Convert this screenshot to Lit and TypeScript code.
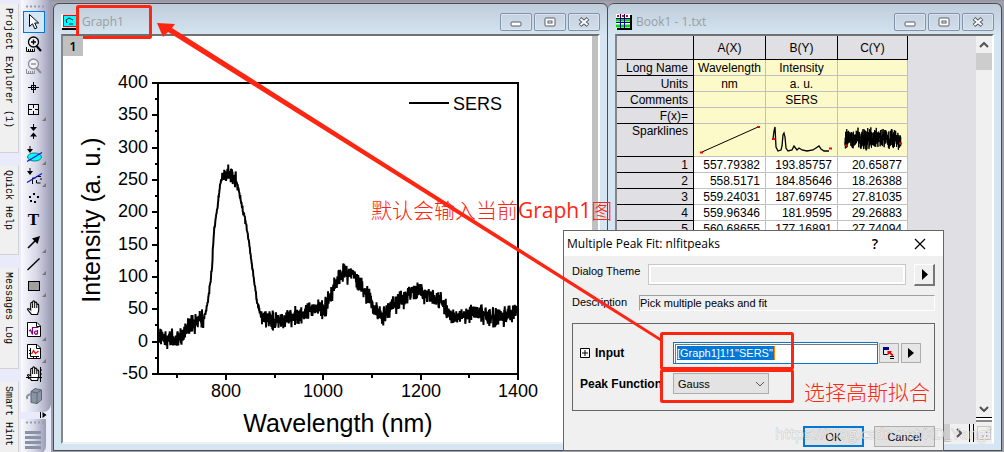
import { LitElement, html, svg, css } from "lit";
import { customElement } from "lit/decorators.js";

/* ---------- spectrum data ---------- */

const TREND: [number, number][] = [
  [159, 334], [163, 338], [167, 340], [177, 339], [182, 335], [188, 328], [194, 325], [200, 317], [204, 319],
  [208, 302], [212, 267], [214, 230], [217, 211], [220, 184], [223, 174], [230, 174], [234, 177], [238, 186],
  [241, 202], [245, 219], [249, 242], [253, 272], [257, 302], [261, 316], [267, 318], [273, 322],
  [280, 320], [288, 319], [295, 315], [303, 317], [310, 309], [325, 308], [330, 295], [338, 278],
  [343, 274], [353, 274], [360, 283], [368, 297], [375, 309], [383, 315], [390, 310], [400, 300],
  [410, 294], [420, 291], [433, 297], [442, 303], [448, 314], [455, 318], [463, 315], [472, 311],
  [483, 313], [495, 318], [507, 315], [517, 309],
];

function noise(seed: number): () => number {
  let s = seed;
  return () => {
    s = (s * 1103515245 + 12345) % 2147483648;
    return s / 2147483648;
  };
}

function spectrum(): string {
  const rnd = noise(41);
  const pts: string[] = [];
  for (let i = 0; i < TREND.length - 1; i++) {
    const [x0, y0] = TREND[i];
    const [x1, y1] = TREND[i + 1];
    const steep = Math.abs((y1 - y0) / (x1 - x0)) > 3;
    for (let x = x0; x < x1; x += 0.25) {
      const y = y0 + ((y1 - y0) * (x - x0)) / (x1 - x0);
      const r = rnd() + rnd() + rnd() - 1.5;
      pts.push(`${x},${(y + r * (steep ? 3 : 9)).toFixed(1)}`);
    }
  }
  return pts.join(" ");
}

function noisyBand(): string {
  const rnd = noise(7);
  const pts: string[] = [];
  for (let x = 7; x < 63; x += 0.125) pts.push(`${x},${(12 + (rnd() + rnd() - 1) * 12).toFixed(1)}`);
  return pts.join(" ");
}

const Y_TICKS = [400, 350, 300, 250, 200, 150, 100, 50, 0, -50];
const X_TICKS = [800, 1000, 1200, 1400];
const yPos = (v: number) => Math.round(341.6 - v * 0.6467);
const xPos = (v: number) => Math.round(226 + (v - 800) * 0.4867);

/* ---------- toolbar icons, each on a 22 x 22 grid ---------- */

const downArrow = svg`<path d="M7 3v5" stroke="#000"/><path d="M4 6h6l-3 4z" fill="#000"/>`;
const ruler = svg`<path d="M3.500 14v4.500h8v-3M5.500 16v2M7.500 16v2M9.500 16v2" fill="none" stroke="currentColor"/>`;
const lens = svg`<circle cx="10.500" cy="9" r="5" fill="#fff" fill-opacity=".6" stroke="currentColor" stroke-width="1.300"/>
  <path d="M13.500 13l4.500 5" stroke="currentColor" stroke-width="2.200"/>`;
const hand = svg`<path d="M8.500 17.500c-1-2-3-3.500-4-5 .5-1.500 2-.8 3.200.5V6.500c.2-1.500 1.700-1.500 1.900 0V5c.2-1.500 2-1.500 2.100 0v1c.3-1.200 1.900-1.200 2.100.3v1.400c.4-1 1.900-.8 1.900.6v5c0 1.500-1 2.500-1.200 4.200z"
  fill="#fff" stroke="#000" stroke-width="1.100"/><path d="M9.600 6.500v4.500M11.700 6v5M13.800 7.500V11" stroke="#000"/>`;
const sheet = svg`<path d="M4.500 3.500h9.500l3.500 3.500v10.500h-13z" fill="#fff" stroke="#000"/><path d="M13.500 3.500v4h4" fill="none" stroke="#000"/>`;

const TOOLS: { name: string; art: unknown; on?: boolean; more?: boolean }[] = [
  { name: "Pointer", on: true, art: svg`<path d="M6.500 3.500v12l3-2.700 2.300 5 2.200-1-2.300-4.800h4z" fill="#fff" stroke="#000"/>` },
  { name: "Zoom in", art: svg`${ruler}${lens}<path d="M8 9h5M10.500 6.500v5" stroke="#000" stroke-width="1.400"/>` },
  { name: "Zoom out", art: svg`<g color="#8a8d99">${ruler}${lens}<path d="M8 9h5" stroke="currentColor" stroke-width="1.400"/></g>` },
  { name: "Screen reader", art: svg`<path d="M10.500 5v11M5 10.500h11" stroke="#000"/><rect x="8.500" y="8.500" width="4" height="4" fill="none" stroke="#000"/>` },
  { name: "Data selector", more: true, art: svg`<rect x="5.500" y="5.500" width="10" height="10" fill="#fff" fill-opacity=".4" stroke="#000"/><path d="M10.500 6v3M10.500 12v3M6 10.500h3M12 10.500h3" stroke="#000"/>` },
  { name: "Data range", art: svg`<path d="M10.500 3v4M10.500 14v4" stroke="#000"/><path d="M7 6h7l-3.500 4zM7 15.500h7l-3.500-4z" fill="#000"/>` },
  { name: "Mask points", more: true, art: svg`<ellipse cx="11.500" cy="14" rx="7" ry="4" fill="#0ff" stroke="#087d86"/><path d="M4 18.500L19 9.500" stroke="#1414d8" stroke-width="1.300"/>${downArrow}` },
  { name: "Mask curve", more: true, art: svg`<path d="M9.500 19v-6h3M13 11.500h5M13.500 15v3h4M18 13v2" stroke="#000" fill="none"/><path d="M4 17.500L19 8.500" stroke="#1414d8" stroke-width="1.300"/>${downArrow}` },
  { name: "Draw data", art: svg`<path d="M10 6h2v2h-2zM6 9h2v2h-2zM14 9h2v2h-2zM7 13h2v2h-2zM11 14h2v2h-2z" fill="#000"/>` },
  { name: "Text", art: svg`<text class="glyph" x="10.500" y="16" text-anchor="middle">T</text>` },
  { name: "Arrow", more: true, art: svg`<path d="M5 17L13 9" stroke="#000" stroke-width="1.600"/><path d="M17 5l-2.500 8-5.500-5.500z" fill="#000"/>` },
  { name: "Line", more: true, art: svg`<path d="M4.500 17L16.500 5.500" stroke="#000" stroke-width="1.400"/>` },
  { name: "Rectangle", more: true, art: svg`<rect x="5.500" y="6.500" width="11" height="9" fill="#a0a0a0" stroke="#000"/>` },
  { name: "Pan", art: hand },
  { name: "Insert equation", more: true, art: svg`${sheet}<path d="M6 12l1.500-1 2 4.500V8.500h6M14.500 11v4.500M14.500 12.500c-3-2-4 2.500-1.500 2.800l1.500-1" fill="none" stroke="#800080" stroke-width="1.200"/>` },
  { name: "Insert graph", more: true, art: svg`${sheet}<path d="M7.500 7v8.500H16M6 9.500h1M6 12.500h1M10.500 16v1M13.500 16v1" stroke="#000" fill="none"/><path d="M8.500 13l2-3.500 2 3 3-2.500" stroke="#e11" fill="none" stroke-width="1.300"/>` },
  { name: "Rescale", art: svg`<g>${hand}</g><path d="M3 14.500h16M17.500 4v15M5.500 13v3M17 7h2M17 11h2" stroke="#000"/>` },
  { name: "3D rotate", art: svg`<path d="M8 6.500l4-3 6.500 1.500v10l-4.500 3.500-6-1z" fill="#8993a2" stroke="#5d6675"/><path d="M8 6.500l6 1.500 4.500-3M14 8v10.500" fill="none" stroke="#5d6675"/><path d="M8 9c-4 1-5 3-3.500 5" fill="none" stroke="#8993a2" stroke-width="2"/>` },
];

/* ---------- window frame ---------- */

@customElement("mdi-window")
export class MdiWindow extends LitElement {
  static properties = { caption: { type: String } };
  caption = "";
  static styles = css`
    :host { display: flex; flex-direction: column; box-sizing: border-box; min-width: 0;
      border: 1px solid #4c4c50; border-radius: 6px 6px 0 0; padding: 0 7px 6px;
      background: linear-gradient(#bfcddb, #d6e5f2 32px); }
    header { display: flex; align-items: center; height: 30px; gap: 4px; }
    h2 { margin: 0; flex: 1; font: 400 12px/18px "Open Sans", "Noto Sans", sans-serif; color: #999da2; padding-top: 6px; white-space: nowrap; }
    .btns { display: flex; gap: 2px; padding-top: 6px; }
    button { width: 32px; height: 18px; padding: 0; border: 1px solid #8193ab; border-radius: 2px;
      background: linear-gradient(#c5d2e0, #d3deea); box-shadow: inset 0 0 0 1px #dbe5ef; display: grid; place-items: center; }
    .client { flex: 1; display: flex; min-height: 0; border: 2px solid #fff; border-top-color: #6f7072; border-left-color: #85868a; border-bottom-color: #f1f1f1; background: #fff; }
    svg { display: block; }
    ::slotted([slot="body"]) { flex: 1; min-width: 0; }
  `;
  render() {
    return html`
      <header>
        <slot name="icon"></slot>
        <h2>${this.caption}</h2>
        <div class="btns">
          <button aria-label="Minimize"><svg width="14" height="12"><rect x="2" y="6" width="10" height="4" rx="1" fill="#fff" stroke="#565d68"/></svg></button>
          <button aria-label="Maximize"><svg width="14" height="12"><rect x="2" y="2" width="10" height="8" rx="1" fill="#fff" stroke="#565d68"/><rect x="5" y="5" width="4" height="2" fill="#fff" stroke="#565d68"/></svg></button>
          <button aria-label="Close"><svg width="14" height="12"><path d="M3 2.500L11 9.500M11 2.500L3 9.500" stroke="#565d68" stroke-width="4"/><path d="M3.500 3L10.500 9M10.500 3L3.500 9" stroke="#fff" stroke-width="2"/></svg></button>
        </div>
      </header>
      <div class="client"><slot name="body"></slot></div>
    `;
  }
}

/* ---------- graph ---------- */

@customElement("graph-page")
export class GraphPage extends LitElement {
  static styles = css`
    :host { display: grid; grid-template-columns: 1fr 6px; background: #fff; }
    .plot { grid-area: 1 / 1; width: 100%; display: block; }
    .strip { grid-area: 1 / 2; background: #c0c0c0; }
    .layer { grid-area: 1 / 1; justify-self: start; align-self: start; z-index: 1; width: 20px; height: 20px;
      padding: 0; border: 0; background: #c0c0c0; color: #000; font: 600 13px/20px "Open Sans", sans-serif; }
    text { font-family: "Liberation Sans", Arial, sans-serif; font-size: 18px; fill: #000; }
    .axis { font-size: 25px; }
  `;
  render() {
    return html`
      <svg class="plot" viewBox="63 36 529 405" role="img" aria-label="SERS spectrum">
        <polyline points=${spectrum()} fill="none" stroke="#000" stroke-width="2" stroke-linejoin="bevel"/>
        <rect x="158" y="83" width="360" height="291" fill="none" stroke="#000" stroke-width="2"/>
        ${Y_TICKS.map((v) => svg`<path d="M152 ${yPos(v)}h6" stroke="#000" stroke-width="2"/>
          <text x="148" y=${yPos(v) + 5} text-anchor="end">${v}</text>
          ${v > -50 ? svg`<path d="M155 ${yPos(v - 25)}h3" stroke="#000" stroke-width="2"/>` : ""}`)}
        ${X_TICKS.map((v) => svg`<path d="M${xPos(v)} 374v6M${xPos(v - 100)} 374v4" stroke="#000" stroke-width="2"/>
          <text x=${xPos(v)} y="397" text-anchor="middle">${v}</text>`)}
        <path d="M409 103h40" stroke="#000" stroke-width="2"/>
        <text x="453" y="110">SERS</text>
        <text class="axis" x="338" y="432" text-anchor="middle">Wavelength (nm)</text>
        <text class="axis" transform="translate(100 220) rotate(-90)" text-anchor="middle">Intensity (a. u.)</text>
      </svg>
      <button class="layer">1</button>
      <div class="strip"></div>
    `;
  }
}

/* ---------- worksheet ---------- */

const ROWS = [
  ["557.79382", "193.85757", "20.65877"],
  ["558.5171", "184.85646", "18.26388"],
  ["559.24031", "187.69745", "27.81035"],
  ["559.96346", "181.9595", "29.26883"],
  ["560.68655", "177.16891", "27.74094"],
];
const LABELS = [
  ["Long Name", "Wavelength", "Intensity", ""],
  ["Units", "nm", "a. u.", ""],
  ["Comments", "", "SERS", ""],
  ["F(x)=", "", "", ""],
];

@customElement("work-sheet")
export class WorkSheet extends LitElement {
  static styles = css`
    :host { display: grid; grid-template-columns: 1fr 16px; grid-template-rows: 1fr 18px; background: #e0dfe4; color: #000;
      font: 12px/14px "Liberation Sans", Arial, sans-serif; }
    .sheet { overflow: hidden; }
    table { border-collapse: separate; border-spacing: 0; table-layout: fixed; width: 291px; }
    .c0 { width: 77px; } .c1 { width: 72px; } .c3 { width: 70px; }
    th, td { box-sizing: border-box; height: 16px; padding: 0 5px 0 0; font-weight: 400; white-space: nowrap; overflow: hidden; }
    th { background: #e0dfe4; border-right: 1px solid #000; border-bottom: 1px solid #000; text-align: right; }
    thead th { height: 24px; text-align: center; padding: 0; }
    td { background: #fff; border-right: 1px solid #c0c0c0; border-bottom: 1px solid #c0c0c0; text-align: right; }
    .meta { background: #fbfac8; text-align: center; padding: 0; }
    .spark th, .spark td { height: 33px; vertical-align: top; }
    .spark svg { display: block; }
    .v { display: flex; flex-direction: column; background: #f0f0f0; }
    .v i { height: 17px; background: #cdcdcd; }
    .v .fill { flex: 1; }
    .v .split { height: 2px; border-top: 1px solid #000; border-bottom: 2px solid #888; margin-bottom: 2px; background: #fff; }
    .arrow { height: 17px; display: grid; place-items: center; border: 0; background: none; padding: 0; }
    .h { grid-column: 1 / 3; display: flex; justify-content: flex-end; background: #f0f0f0; }
    .h i { width: 40px; background: #cdcdcd; }
    .h .arrow { width: 18px; height: 18px; }
    .h .bars { width: 3px; border-left: 1px solid #000; border-right: 1px solid #000; margin: 0 2px 0 1px; }
    .grip { width: 16px; display: grid; place-items: center; }
  `;
  render() {
    return html`
      <div class="sheet">
        <table>
          <colgroup><col class="c0"><col class="c1"><col class="c1"><col class="c3"></colgroup>
          <thead><tr><th></th><th scope="col">A(X)</th><th scope="col">B(Y)</th><th scope="col">C(Y)</th></tr></thead>
          <tbody>
            ${LABELS.map(([h, ...cells]) => html`<tr><th scope="row">${h}</th>${cells.map((c) => html`<td class="meta">${c}</td>`)}</tr>`)}
            <tr class="spark">
              <th scope="row">Sparklines</th>
              <td class="meta"><svg width="71" height="32"><path d="M8 28L64 3" stroke="#000"/><path d="M6 28.500h3M63 3h3" stroke="#f00" stroke-width="2"/></svg></td>
              <td class="meta"><svg width="71" height="32"><path d="M7 15l1-8 1-4 1 20 2 4 3-1 1-4 1-11 1-2 1 4 1 11 2 3 4-1 2-4 3 4 2-2 3 2 5 1 6-1 3-2 3-2 2 3 3 2 5 0" fill="none" stroke="#000" stroke-width="1.300"/><path d="M6 15h3M63 24.500h3" stroke="#f00" stroke-width="2"/></svg></td>
              <td class="meta"><svg width="69" height="32"><polyline points=${noisyBand()} transform="translate(0 3)" fill="none" stroke="#000"/><path d="M7 21.500h2M61 19.500h3" stroke="#f00" stroke-width="2"/></svg></td>
            </tr>
            ${ROWS.map((r, i) => html`<tr><th scope="row">${i + 1}</th>${r.map((c) => html`<td>${c}</td>`)}</tr>`)}
          </tbody>
        </table>
      </div>
      <div class="v">
        <button class="arrow" aria-label="Scroll up"><svg width="10" height="6"><path d="M1 5l4-4 4 4" fill="none" stroke="#505050" stroke-width="2"/></svg></button>
        <i></i><span class="fill"></span>
        <button class="arrow" aria-label="Scroll down"><svg width="10" height="6"><path d="M1 1l4 4 4-4" fill="none" stroke="#505050" stroke-width="2"/></svg></button>
        <div class="split"></div>
      </div>
      <div class="h">
        <i></i>
        <button class="arrow" aria-label="Scroll right"><svg width="6" height="10"><path d="M1 1l4 4-4 4" fill="none" stroke="#505050" stroke-width="2"/></svg></button>
        <div class="bars"></div>
        <div class="grip"><svg width="14" height="14"><rect x=".5" y=".5" width="13" height="13" fill="none" stroke="#c8c8c8"/><path d="M9 5h2v2H9zM9 9h2v2H9zM5 9h2v2H5z" fill="#b0b0b0"/></svg></div>
      </div>
    `;
  }
}

/* ---------- dialog ---------- */

@customElement("peak-dialog")
export class PeakDialog extends LitElement {
  static styles = css`
    :host { display: block; box-sizing: border-box; border: 1px solid #666; background: #f0f0f0; color: #000;
      font: 11px/14px "Liberation Sans", Arial, sans-serif; }
    header { display: flex; align-items: center; height: 25px; background: #fff; padding: 0 8px 0 3px; }
    h2 { margin: 0; flex: 1; font: 400 12px/16px "Open Sans", "Noto Sans", sans-serif; }
    header button { width: 30px; padding: 0; border: 0; background: none; display: grid; place-items: center; font: 600 14px/18px "Open Sans", sans-serif; }
    header button + button { margin-left: 15px; }
    form { display: flex; flex-direction: column; padding: 8px 8px 3px; }
    input, select, button, .in { font: inherit; color: inherit; box-sizing: border-box; border-radius: 0; margin: 0; }
    .row { display: flex; align-items: flex-start; justify-content: space-between; }
    .theme { width: 258px; height: 21px; border: 1px solid #c8c8c8; outline: 2px solid #fff; outline-offset: -3px; background: #f0f0f0; padding: 0 4px; }
    .go { width: 21px; height: 22px; padding: 0; border: 1px solid #fff; border-right: 2px solid #777; border-bottom: 2px solid #777; background: #f0f0f0; display: grid; place-items: center; }
    .desc { margin-top: 9px; }
    .text { width: 296px; height: 16px; border: 1px solid #a0a0a0; border-right-color: #fff; border-bottom-color: #fff; background: #f0f0f0; padding: 0; }
    fieldset { margin: 12px 0 0; padding: 18px 8px 16px 7px; border: 1px solid #666; min-width: 0; display: flex; flex-direction: column; gap: 9px; }
    .line { display: flex; align-items: center; }
    .line label { flex: none; width: 93px; box-sizing: border-box; padding-right: 12px; font-size: 12px; font-weight: 700; display: flex; align-items: center; gap: 5px; white-space: nowrap; overflow: hidden; }
    .in { flex: none; width: 205px; height: 22px; border: 1px solid #0078d7; box-shadow: inset 1px 1px #fff, inset 2px 2px #777; background: #fff; display: flex; align-items: center; padding: 0 3px; }
    .in input { border: 0; padding: 0; outline: 0; width: 98px; height: 14px; background: #0078d7; color: #fff; border-right: 1px solid #ff8a00; }
    .sq { width: 20px; height: 20px; padding: 0; border: 1px solid #adadad; background: #e6e6e6; display: grid; place-items: center; margin-left: 1px; }
    .sq + .sq { margin-left: 2px; }
    .pick { display: grid; width: 96px; height: 21px; }
    select { appearance: none; grid-area: 1 / 1; border: 1px solid #adadad; background: #e3e3e3; padding: 0 4px; }
    .pick svg { grid-area: 1 / 1; justify-self: end; align-self: center; margin-right: 4px; pointer-events: none; }
    footer { display: flex; justify-content: flex-end; gap: 10px; padding-top: 15px; }
    footer button { width: 61px; height: 21px; padding: 0; border: 1px solid #adadad; background: #e1e1e1; }
    footer .ok { border: 2px solid #0078d7; }
  `;
  render() {
    const tri = html`<svg width="7" height="11"><path d="M1 0l6 5.500L1 11z" fill="#000"/></svg>`;
    return html`
      <header>
        <h2>Multiple Peak Fit: nlfitpeaks</h2>
        <button aria-label="Help">?</button>
        <button aria-label="Close"><svg width="12" height="12"><path d="M1 1l10 10M11 1L1 11" stroke="#000" stroke-width="1.200"/></svg></button>
      </header>
      <form @submit=${(e: Event) => e.preventDefault()}>
        <div class="row">
          <label for="theme">Dialog Theme</label>
          <input id="theme" class="theme" readonly>
          <button type="button" class="go" aria-label="Theme menu">${tri}</button>
        </div>
        <div class="row desc">
          <label for="desc">Description</label>
          <input id="desc" class="text" readonly value="Pick multiple peaks and fit">
        </div>
        <fieldset>
          <div class="line">
            <label for="input"><svg width="10" height="10"><path d="M.5.5h9v9h-9zM2 5h6M5 2v6" fill="#fff" stroke="#000"/></svg>Input</label>
            <span class="in"><input id="input" .value=${'[Graph1]1!1"SERS"'}></span>
            <button type="button" class="sq" aria-label="Select data"><svg width="12" height="12"><path d="M0 0h6v3H0z" fill="#008"/><path d="M.5 3v4.500h4M7 9.500h4M7 11.500h4" stroke="#000" fill="none"/><path d="M4.500 4h4.500L7.800 5.200l2.700 2.700-1.300 1.300-2.700-2.700-2 2z" fill="#e00"/></svg></button>
            <button type="button" class="sq" aria-label="Input menu"><svg width="6" height="10"><path d="M0 0l6 5-6 5z" fill="#000"/></svg></button>
          </div>
          <div class="line">
            <label for="fn">Peak Function</label>
            <span class="pick">
              <select id="fn"><option>Gauss</option></select>
              <svg width="10" height="6"><path d="M1 1l4 4 4-4" fill="none" stroke="#555"/></svg>
            </span>
          </div>
        </fieldset>
        <footer><button class="ok">OK</button><button type="button">Cancel</button></footer>
      </form>
    `;
  }
}

/* ---------- application ---------- */

@customElement("app-root")
export class AppRoot extends LitElement {
  static styles = css`
    :host { display: flex; position: relative; min-height: 100vh; box-sizing: border-box; overflow: hidden; background: #e9ebfb; }
    .tabs { width: 19px; height: 100vh; box-sizing: border-box; overflow: hidden; display: flex; flex-direction: column; gap: 13px; padding-top: 4px; }
    .tab { flex: none; writing-mode: vertical-rl; text-align: left; border: 1px solid #d2d2d6; border-width: 0 1px 1px 0; border-radius: 0; background: #f0f0f0;
      padding: 4px 5px 24px 3px; margin: 0; width: 19px; font: 10px/10px "Liberation Mono", monospace; color: #000; }
    .bars { width: 32px; height: 100vh; overflow: hidden; display: flex; flex-direction: column; padding: 0 0 0 2px; box-sizing: border-box; }
    .bar { flex: none; display: flex; flex-direction: column; width: 30px; box-sizing: border-box; padding: 5px 0 5px 2px; margin: 0;
      background: linear-gradient(90deg, #fafaff, #d8d9e8 50%, #9b9cb4); border-radius: 0 0 8px 0; }
    .grip { height: 6px; width: 20px; margin-left: 2px; }
    .tool { position: relative; width: 22px; height: 22px; padding: 0; border: 0; background: none; color: #000; display: block; }
    .tool.on { background: #d4e7f8; box-shadow: inset 0 0 0 1px #0078d7; }
    .tool svg { display: block; overflow: visible; }
    .glyph { font: bold 17px "Liberation Serif", serif; }
    .over { height: 8px; display: flex; justify-content: flex-end; padding-right: 4px; }
    .bar.two { width: 25px; padding-left: 2px; padding-top: 2px; }
    .work { flex: 1; min-width: 0; display: flex; flex-direction: column; background: #9f9fab; }
    .strip { height: 3px; background: linear-gradient(#9797a8 1px, #a9a9b0); }
    .mdi { flex: 1; display: grid; grid-template-columns: minmax(0, 555fr) minmax(0, 394fr); padding: 0 2px 1px; }
    .book { border-left-width: 0; }
    mdi-window > svg { display: block; margin-top: 6px; }
    peak-dialog { position: absolute; left: 563px; top: 230px; width: 381px; }
    .notes { position: absolute; left: 0; top: 0; pointer-events: none; }
    .notes text { font-family: "Open Sans", "Noto Sans CJK SC", sans-serif; font-size: 21px; font-weight: 300; fill: #fd2613; }
    .notes .latin { font-weight: 400; }
    .notes .mark { font-size: 15px; font-weight: 400; fill: #fff; fill-opacity: .65; stroke: #777; stroke-opacity: .3; stroke-width: 1px; paint-order: stroke; }
  `;
  render() {
    const dots = html`<svg class="grip" viewBox="0 0 20 6"><path d="M1 1.500h19" stroke="#9b9dad" stroke-width="2" stroke-dasharray="2 2"/></svg>`;
    return html`
      <nav class="tabs">
        ${["Project Explorer (1)", "Quick Help", "Messages Log", "Smart Hint"].map((t) => html`<button class="tab">${t}</button>`)}
      </nav>
      <div class="bars">
        <div class="bar">
          ${dots}
          ${TOOLS.map((t) => html`<button class="tool ${t.on ? "on" : ""}" aria-label=${t.name}>
            <svg width="22" height="22" viewBox="0 0 22 22">${t.art}${t.more ? svg`<path d="M23 18v4h-4z" fill="#777"/>` : ""}</svg></button>`)}
        </div>
        <div class="over"><svg width="8" height="7"><path d="M1.500 0v6" stroke="#000"/><path d="M3.500 0l4 3-4 3z" fill="#000"/></svg></div>
        <div class="bar two">
          ${dots}
          <svg width="20" height="22"><path d="M2 5.500h16M2 10.500h16M2 15.500h16M2 20.500h16" stroke="#8a93a6" stroke-width="3"/></svg>
        </div>
      </div>
      <main class="work">
        <div class="strip"></div>
        <div class="mdi">
          <mdi-window class="graph" caption="Graph1">
            <svg slot="icon" width="17" height="16"><rect x="2.500" y="1.500" width="13" height="11" fill="#0ff" stroke="#f00"/><path d="M1 15h14" stroke="#000" stroke-width="2"/><path d="M0 0v14h2V0z" fill="#fff"/><path d="M6 9l-1-3 3-2 4 2M8 10h4" fill="none" stroke="#124"/></svg>
            <graph-page slot="body"></graph-page>
          </mdi-window>
          <mdi-window class="book" caption="Book1 - 1.txt">
            <svg slot="icon" width="17" height="16"><rect x="1" y="0" width="15" height="15" fill="#fff"/><path d="M1 6h14M1 12h14" stroke="#0d0" stroke-width="3"/><path d="M1 4.500h14M1 8.500h14M5.500 0v14M9.500 0v14" stroke="#008"/><path d="M2 2h2M7 2h2M11 2h2" stroke="#f00" stroke-width="2"/><path d="M2 15h14V1" fill="none" stroke="#000" stroke-width="2"/></svg>
            <work-sheet slot="body"></work-sheet>
          </mdi-window>
        </div>
      </main>
      <peak-dialog role="dialog" aria-label="Multiple Peak Fit"></peak-dialog>
      <svg class="notes" width="1004" height="452">
        <path d="M157 23L175 24L172 28L662 339L660 341L168 32L163 37z" fill="#fd2613"/>
        <g fill="none" stroke="#fd2613" stroke-width="3">
          <rect x="77.500" y="6.500" width="73" height="31" rx="1"/>
          <rect x="661.500" y="333.500" width="131" height="35" rx="1"/>
          <rect x="661.500" y="370.500" width="131" height="31" rx="1"/>
        </g>
        <text x="371" y="218">默认会输入当前<tspan class="latin">Graph1</tspan>图</text>
        <text x="804" y="400">选择高斯拟合</text>
        <text class="mark" x="775" y="439">https://blog.csdn.net/XD_Yangf</text>
      </svg>
    `;
  }
}
